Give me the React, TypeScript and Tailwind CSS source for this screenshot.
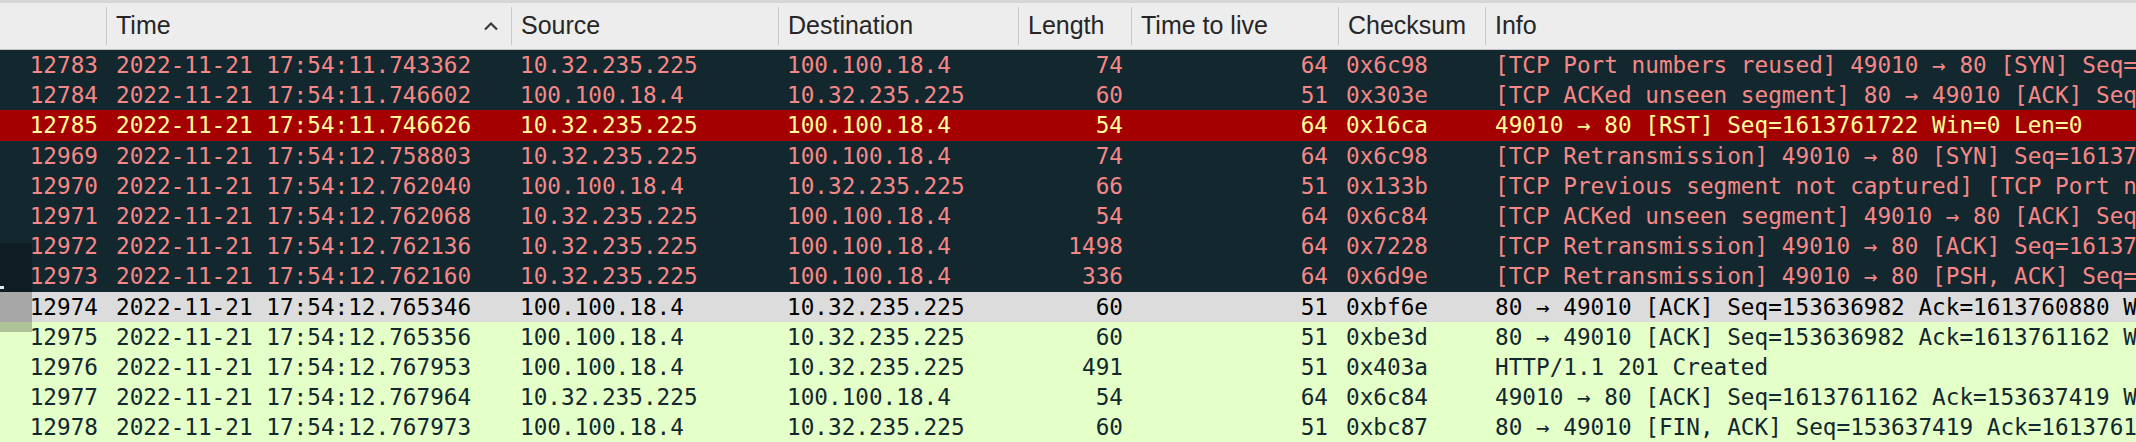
import React from 'react';

type Tone = 'bad' | 'rst' | 'selected' | 'http';

interface Packet {
  no: number;
  time: string;
  source: string;
  destination: string;
  length: number;
  ttl: number;
  checksum: string;
  info: string;
  tone: Tone;
}

const packets: Packet[] = [
  { no: 12783, time: '2022-11-21 17:54:11.743362', source: '10.32.235.225', destination: '100.100.18.4', length: 74, ttl: 64, checksum: '0x6c98', info: '[TCP Port numbers reused] 49010 → 80 [SYN] Seq=1613760879 Win=65535 Len=0 MSS=1460', tone: 'bad' },
  { no: 12784, time: '2022-11-21 17:54:11.746602', source: '100.100.18.4', destination: '10.32.235.225', length: 60, ttl: 51, checksum: '0x303e', info: '[TCP ACKed unseen segment] 80 → 49010 [ACK] Seq=153636982 Ack=1613761722 Win=65535', tone: 'bad' },
  { no: 12785, time: '2022-11-21 17:54:11.746626', source: '10.32.235.225', destination: '100.100.18.4', length: 54, ttl: 64, checksum: '0x16ca', info: '49010 → 80 [RST] Seq=1613761722 Win=0 Len=0', tone: 'rst' },
  { no: 12969, time: '2022-11-21 17:54:12.758803', source: '10.32.235.225', destination: '100.100.18.4', length: 74, ttl: 64, checksum: '0x6c98', info: '[TCP Retransmission] 49010 → 80 [SYN] Seq=1613760879 Win=65535 Len=0', tone: 'bad' },
  { no: 12970, time: '2022-11-21 17:54:12.762040', source: '100.100.18.4', destination: '10.32.235.225', length: 66, ttl: 51, checksum: '0x133b', info: '[TCP Previous segment not captured] [TCP Port numbers reused] 80 → 49010 [SYN, ACK]', tone: 'bad' },
  { no: 12971, time: '2022-11-21 17:54:12.762068', source: '10.32.235.225', destination: '100.100.18.4', length: 54, ttl: 64, checksum: '0x6c84', info: '[TCP ACKed unseen segment] 49010 → 80 [ACK] Seq=1613760880 Ack=153636982', tone: 'bad' },
  { no: 12972, time: '2022-11-21 17:54:12.762136', source: '10.32.235.225', destination: '100.100.18.4', length: 1498, ttl: 64, checksum: '0x7228', info: '[TCP Retransmission] 49010 → 80 [ACK] Seq=1613760880 Ack=153636982 Win=65535', tone: 'bad' },
  { no: 12973, time: '2022-11-21 17:54:12.762160', source: '10.32.235.225', destination: '100.100.18.4', length: 336, ttl: 64, checksum: '0x6d9e', info: '[TCP Retransmission] 49010 → 80 [PSH, ACK] Seq=1613762324 Ack=153636982', tone: 'bad' },
  { no: 12974, time: '2022-11-21 17:54:12.765346', source: '100.100.18.4', destination: '10.32.235.225', length: 60, ttl: 51, checksum: '0xbf6e', info: '80 → 49010 [ACK] Seq=153636982 Ack=1613760880 Win=65535 Len=0', tone: 'selected' },
  { no: 12975, time: '2022-11-21 17:54:12.765356', source: '100.100.18.4', destination: '10.32.235.225', length: 60, ttl: 51, checksum: '0xbe3d', info: '80 → 49010 [ACK] Seq=153636982 Ack=1613761162 Win=65535 Len=0', tone: 'http' },
  { no: 12976, time: '2022-11-21 17:54:12.767953', source: '100.100.18.4', destination: '10.32.235.225', length: 491, ttl: 51, checksum: '0x403a', info: 'HTTP/1.1 201 Created', tone: 'http' },
  { no: 12977, time: '2022-11-21 17:54:12.767964', source: '10.32.235.225', destination: '100.100.18.4', length: 54, ttl: 64, checksum: '0x6c84', info: '49010 → 80 [ACK] Seq=1613761162 Ack=153637419 Win=65535 Len=0', tone: 'http' },
  { no: 12978, time: '2022-11-21 17:54:12.767973', source: '100.100.18.4', destination: '10.32.235.225', length: 60, ttl: 51, checksum: '0xbc87', info: '80 → 49010 [FIN, ACK] Seq=153637419 Ack=1613761162 Win=65535 Len=0', tone: 'http' },
];

const toneClass: Record<Tone, string> = {
  bad: 'bg-[#12272e] text-[#f78787]',
  rst: 'bg-[#a40000] text-[#fffc9c]',
  selected: 'bg-[#dcdcdc] text-black',
  http: 'bg-[#e4ffc7] text-[#12272e]',
};

const cols = 'grid grid-cols-[106px_405px_267px_240px_113px_207px_147px_1fr]';

const HeaderCell = ({ label, first, children }: { label: string; first?: boolean; children?: React.ReactNode }) => (
  <div className="flex items-center h-full">
    <div className={`flex items-center justify-between w-full h-[38px] pl-[9px] ${first ? '' : 'border-l border-[#c9c9c9]'}`}>
      <span>{label}</span>
      {children}
    </div>
  </div>
);

export default function App() {
  return (
    <div className="relative w-[2136px] h-[442px] overflow-hidden bg-[#e4ffc7]">
      {/* column header */}
      <div className={`${cols} h-[50px] bg-[#ededed] border-t-[3px] border-t-[#d6d6d6] border-b border-b-[#c2c2c2] text-[25px] text-[#262626] font-['Liberation_Sans',Arial,sans-serif]`}>
        <HeaderCell label="" first />
        <HeaderCell label="Time">
          <svg width="16" height="10" viewBox="0 0 16 10" className="mr-[12px]">
            <polyline points="2,8.5 8,2.5 14,8.5" fill="none" stroke="#3a3a3a" strokeWidth="2.2" />
          </svg>
        </HeaderCell>
        <HeaderCell label="Source" />
        <HeaderCell label="Destination" />
        <HeaderCell label="Length" />
        <HeaderCell label="Time to live" />
        <HeaderCell label="Checksum" />
        <HeaderCell label="Info" />
      </div>

      {/* packet rows */}
      <div className="font-['DejaVu_Sans_Mono','Liberation_Mono',monospace] text-[22.7px] leading-[30px] whitespace-nowrap">
        {packets.map((p) => (
          <div key={p.no} className={`${cols} h-[30.2px] ${toneClass[p.tone]}`}>
            <div className="text-right pr-[8px]">{p.no}</div>
            <div className="pl-[10px]">{p.time}</div>
            <div className="pl-[9px]">{p.source}</div>
            <div className="pl-[9px]">{p.destination}</div>
            <div className="text-right pr-[8px]">{p.length}</div>
            <div className="text-right pr-[10px]">{p.ttl}</div>
            <div className="pl-[8px]">{p.checksum}</div>
            <div className="pl-[10px] overflow-hidden">{p.info}</div>
          </div>
        ))}
      </div>

      {/* scroll marker overlay at the left edge */}
      <div className="absolute left-0 top-[243px] w-[32px] h-[89px] bg-black/[0.24]" />
      <div className="absolute left-0 top-[286px] w-[4px] h-[3px] bg-white/90" />
    </div>
  );
}
